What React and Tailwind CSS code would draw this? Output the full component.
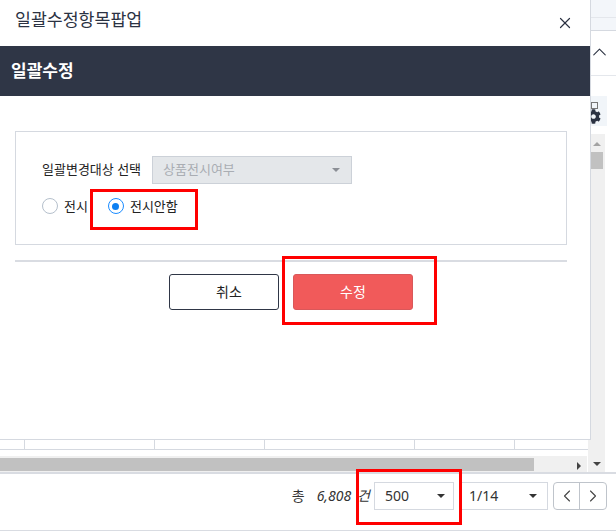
import React from 'react';
import { X, ChevronUp, ChevronLeft, ChevronRight } from 'lucide-react';
import { FaCog } from 'react-icons/fa';

const Caret = ({ dir = 'down', className = '' }) => {
  const points = {
    down: '0,0 8,0 4,4',
    up: '0,4 8,4 4,0',
    right: '0,0 4,4 0,8',
  };
  const size = dir === 'right' ? { width: 4, height: 8 } : { width: 8, height: 4 };
  return (
    <svg {...size} className={className}>
      <polygon points={points[dir]} fill="currentColor" />
    </svg>
  );
};

const Radio = ({ label, checked }) => (
  <label className="flex items-center">
    <span
      className={`flex h-4 w-4 items-center justify-center rounded-full border bg-white ${
        checked ? 'border-[#1a8cff]' : 'border-[#b5c0cc]'
      }`}
    >
      {checked && <span className="h-[7px] w-[7px] rounded-full bg-[#0d80f2]" />}
    </span>
    <span className="ml-1.5 text-[13px] leading-4 text-[#222]">{label}</span>
  </label>
);

const Modal = () => (
  <div className="absolute left-0 top-0 z-10 flex h-[440px] w-[591px] flex-col border-b border-r border-[#d5d9e0] bg-white">
    <div className="flex h-[46px] shrink-0 items-center justify-between pb-1.5 pl-[15px] pr-4">
      <h1 className="text-[17.3px] leading-none text-[#2b3242]">일괄수정항목팝업</h1>
      <X size={18} strokeWidth={1.6} className="mt-1.5 text-[#2b3242]" />
    </div>
    <div className="flex h-[50px] shrink-0 items-center bg-[#2f3646] pl-[11px]">
      <h2 className="text-[17px] font-bold text-white">일괄수정</h2>
    </div>

    <div className="mx-[15px] mt-[35px] h-[114px] w-[552px] border border-[#d5d9e0] pl-[26px] pt-6">
      <div className="flex items-center">
        <span className="text-[13px] text-[#222]">일괄변경대상 선택</span>
        <div className="ml-[11px] flex h-[28px] w-[200px] items-center justify-between border border-[#ccd1d8] bg-[#e4e7ea] pl-[10px] pr-[11px]">
          <span className="text-[13px] text-[#a9adb3]">상품전시여부</span>
          <Caret className="text-[#8b8f96]" />
        </div>
      </div>
      <div className="mt-[14px] flex items-center gap-5">
        <Radio label="전시" />
        <Radio label="전시안함" checked />
      </div>
    </div>

    <div className="mx-[15px] mt-[15px] h-0.5 w-[552px] bg-[#d9dce2]" />

    <div className="mt-3 flex justify-center gap-3.5 pr-2">
      <button className="h-9 w-[110px] rounded-[3px] border border-[#2f3646] bg-white pl-2.5 text-sm text-[#222]">
        취소
      </button>
      <button className="h-9 w-[120px] rounded-[3px] border border-[#d9585a] bg-[#f15a5a] text-sm text-white">
        수정
      </button>
    </div>
  </div>
);

const TableRow = () => (
  <div className="flex h-[11px] border-b border-[#d5d9e0]">
    {[25, 130, 110, 150, 100].map((w, i) => (
      <div key={i} style={{ width: w }} className="border-r border-[#d5d9e0]" />
    ))}
  </div>
);

const SideColumn = () => (
  <div className="flex w-[28px] shrink-0 flex-col">
    <div className="h-[18px] border-b border-[#e4e7ec] bg-[#f3f6fa]" />
    <div className="h-[13px] border-b border-[#d5d9e0] bg-[#f3f6fa]" />
    <div className="flex h-[45px] items-center justify-end border-b border-[#e4e7ec] pb-0.5 pr-[5px]">
      <ChevronUp size={24} strokeWidth={1.1} className="text-[#2b3242]" />
    </div>
    <div className="ml-[3px] mt-5 h-[30px] w-4 bg-[#f1f5f9] pt-1.5">
      <div className="h-[7px] w-[7px] border border-[#777]" />
      <FaCog size={15} className="-ml-[5px] text-[#2b3242]" />
    </div>
    <div className="mt-2 flex h-[338px] w-[17px] flex-col bg-[#f0f0f0]">
      <div className="flex h-[18px] items-center justify-center pt-0.5">
        <Caret dir="up" className="text-[#a3a3a3]" />
      </div>
      <div className="ml-px h-[17px] w-[14px] bg-[#c1c1c1]" />
      <div className="flex flex-1 items-end justify-center pb-[6px]">
        <Caret dir="down" className="text-[#444]" />
      </div>
    </div>
  </div>
);

const PageSelect = ({ value, className }) => (
  <div className={`flex h-[28px] items-center justify-between border border-[#d5d9e0] bg-white ${className}`}>
    <span className="text-sm text-[#333]">{value}</span>
    <Caret className="text-[#333]" />
  </div>
);

const Footer = () => (
  <div className="flex h-[59px] shrink-0 items-center justify-end border-b border-t-2 border-[#d9dce2] bg-white pb-3 pr-[9px] text-sm text-[#333]">
    <span>총</span>
    <span className="ml-3 italic">6,808</span>
    <span className="ml-[6px] italic">건</span>
    <PageSelect value="500" className="ml-1 w-[80px] pl-[10px] pr-2" />
    <PageSelect value="1/14" className="ml-[5px] w-[89px] pl-[9px] pr-2.5" />
    <div className="ml-[5px] flex h-[28px] w-[54px] rounded border border-[#bfc4cb]">
      <div className="flex w-[26px] items-center justify-center border-r border-[#bfc4cb]">
        <ChevronLeft size={20} strokeWidth={1.3} className="text-[#444]" />
      </div>
      <div className="flex flex-1 items-center justify-center">
        <ChevronRight size={20} strokeWidth={1.3} className="text-[#444]" />
      </div>
    </div>
  </div>
);

const Annotations = () => (
  <>
    <div className="absolute left-[90px] top-[189px] z-20 h-[41px] w-[108px] border-[3px] border-[#ff0000]" />
    <div className="absolute left-[282px] top-[256px] z-20 h-[69px] w-[155px] border-[3px] border-[#ff0000]" />
    <div className="absolute left-[356px] top-[469px] z-20 h-[56px] w-[106px] border-[3px] border-[#ff0000]" />
  </>
);

export default function App() {
  return (
    <div className="relative flex h-[532px] w-[616px] flex-col overflow-hidden bg-white font-['Noto_Sans','Noto_Sans_CJK_KR',sans-serif]">
      <Modal />
      <Annotations />
      <div className="flex h-[472px] shrink-0">
        <div className="flex min-w-0 flex-1 flex-col justify-end">
          <TableRow />
          <div className="mr-px mt-1.5 flex h-4 bg-[#f0f0f0] pr-1.5 pt-0.5">
            <div className="h-[13px] w-[534px] bg-[#c1c1c1]" />
            <div className="flex-1" />
            <Caret dir="right" className="mt-1 text-[#444]" />
          </div>
        </div>
        <SideColumn />
      </div>
      <Footer />
    </div>
  );
}
